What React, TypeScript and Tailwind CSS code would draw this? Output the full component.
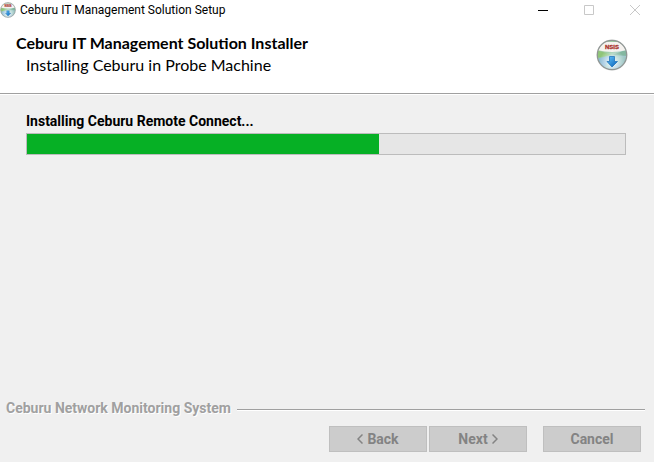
import { useId, type ReactNode } from "react";

interface DiscIconProps {
  className: string;
}

/** Installer disc: iridescent face, red lettering and a blue download arrow. */
function DiscIcon({ className }: DiscIconProps) {
  const id = useId();

  return (
    <svg viewBox="0 0 32 32" className={className} aria-hidden="true">
      <defs>
        <linearGradient id={`${id}face`} x1="0" y1="0" x2="1" y2="1">
          <stop offset="0" stopColor="#c9d9c4" />
          <stop offset="0.4" stopColor="#8fc596" />
          <stop offset="0.65" stopColor="#a9cfd8" />
          <stop offset="1" stopColor="#86a3c2" />
        </linearGradient>
        <linearGradient id={`${id}arrow`} x1="0" y1="0" x2="1" y2="1">
          <stop offset="0" stopColor="#63c4fb" />
          <stop offset="1" stopColor="#075fb8" />
        </linearGradient>
        <radialGradient id={`${id}glow`} cx="0.5" cy="0.72" r="0.4">
          <stop offset="0" stopColor="#f4fbff" />
          <stop offset="1" stopColor="#f4fbff" stopOpacity="0" />
        </radialGradient>
        <clipPath id={`${id}clip`}>
          <circle cx="16" cy="16" r="14.5" />
        </clipPath>
      </defs>
      <circle cx="16" cy="16" r="15.5" fill="#dedede" />
      <g clipPath={`url(#${id}clip)`}>
        <rect width="32" height="32" fill={`url(#${id}face)`} />
        <path d="M16 16 0 11v8z" fill="#8cc36f" opacity="0.8" />
        <path d="M16 16 32 10v7z" fill="#7fb59a" opacity="0.9" />
        <path d="M16 16 0 20l6 12z" fill="#8fb9e2" opacity="0.8" />
        <path d="M16 16 32 18l-5 12z" fill="#9fc9bb" opacity="0.6" />
        <path d="M3 3h26l2 8q-15 4-30 0z" fill="#f5f2ef" />
        <rect width="32" height="32" fill={`url(#${id}glow)`} />
      </g>
      <circle cx="16" cy="16" r="14.7" fill="none" stroke="#8f9593" strokeWidth="1.2" />
      <text
        x="16"
        y="10"
        textAnchor="middle"
        fontSize="6"
        fontWeight="bold"
        fontFamily="Liberation Sans, sans-serif"
        fill="#a8322c"
        stroke="#a8322c"
        strokeWidth="0.3"
      >
        NSIS
      </text>
      <path
        d="M13.500 17.500h5v5H21.500L16 28l-5-5.500h2.500z"
        fill={`url(#${id}arrow)`}
        stroke="#176bb5"
        strokeWidth="0.7"
      />
    </svg>
  );
}

interface CaptionButtonProps {
  label: string;
  disabled?: boolean;
  children: ReactNode;
}

function CaptionButton({ label, disabled, children }: CaptionButtonProps) {
  return (
    <button
      type="button"
      aria-label={label}
      disabled={disabled}
      className="flex h-5 w-[38px] items-center justify-center text-black disabled:text-[#c8c8c8]"
    >
      <svg viewBox="0 0 10 10" className="h-[10px] w-[10px]" fill="none" stroke="currentColor">
        {children}
      </svg>
    </button>
  );
}

function WizardButton({ children }: { children: ReactNode }) {
  return (
    <button
      type="button"
      disabled
      className="flex h-[26px] w-[98px] items-center justify-center gap-1 border border-[#bfbfbf] bg-[#cccccc] font-bold text-[#838383]"
    >
      {children}
    </button>
  );
}

export default function App() {
  const progress = 58.8;

  return (
    <div className="flex min-h-screen flex-col bg-[#f0f0f0] font-['Roboto',sans-serif] text-sm text-black">
      <div className="flex h-5 items-center bg-white">
        <DiscIcon className="h-4 w-4" />
        <span className="ml-1 text-[12px] leading-5">Ceburu IT Management Solution Setup</span>
        <div className="ml-auto flex gap-2">
          <CaptionButton label="Minimize">
            <path d="M0 5.500h10" />
          </CaptionButton>
          <CaptionButton label="Maximize" disabled>
            <path d="M.5.5h9v9H.5z" />
          </CaptionButton>
          <CaptionButton label="Close" disabled>
            <path d="m0 0 10 10M10 0 0 10" />
          </CaptionButton>
        </div>
      </div>

      <header className="flex items-start justify-between border-b border-[#a0a0a0] bg-white pt-[11px] pr-[26px] pb-[18px] pl-4 font-['Lato',sans-serif] text-base">
        <div>
          <h1 className="leading-6 font-bold">Ceburu IT Management Solution Installer</h1>
          <p className="pl-[10px] leading-5">Installing Ceburu in Probe Machine</p>
        </div>
        <DiscIcon className="mt-2 h-8 w-8" />
      </header>

      <main className="flex-1 border-t border-white pt-4 pr-7 pl-[26px]">
        <p id="status" className="leading-5 font-bold">
          Installing Ceburu Remote Connect...
        </p>
        <div
          role="progressbar"
          aria-labelledby="status"
          aria-valuenow={progress}
          className="mt-[2px] h-[22px] w-full border border-[#bcbcbc] bg-[#e6e6e6]"
        >
          <div className="h-full bg-[#06b025]" style={{ width: `${progress}%` }} />
        </div>
      </main>

      <footer className="pb-[10px]">
        <div className="flex items-center gap-1.5 pr-[9px] pl-[6px]">
          <span className="leading-5 font-bold text-[#a0a0a0] [text-shadow:1px_1px_0_#fff]">
            Ceburu Network Monitoring System
          </span>
          <div className="mt-1 h-[2px] flex-1 border-t border-[#a0a0a0] bg-white" />
        </div>
        <div className="mt-2 flex justify-end gap-4 pr-[13px]">
          <div className="flex gap-[2px]">
            <WizardButton>
              <svg viewBox="0 0 6 10" className="h-[10px] w-[6px]" fill="none" stroke="currentColor" strokeWidth="1.500">
                <path d="M5.500.5 1 5l4.500 4.500" />
              </svg>
              Back
            </WizardButton>
            <WizardButton>
              Next
              <svg viewBox="0 0 6 10" className="h-[10px] w-[6px]" fill="none" stroke="currentColor" strokeWidth="1.500">
                <path d="M.5.5 5 5 .5 9.500" />
              </svg>
            </WizardButton>
          </div>
          <WizardButton>Cancel</WizardButton>
        </div>
      </footer>
    </div>
  );
}
